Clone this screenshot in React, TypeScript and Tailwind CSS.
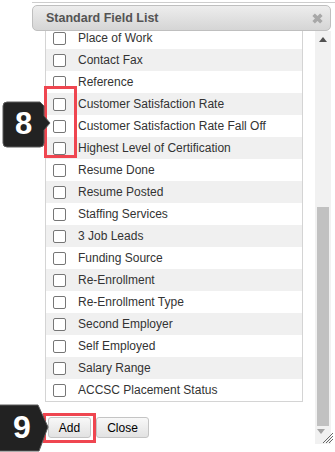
const fields = [
  "Place of Work",
  "Contact Fax",
  "Reference",
  "Customer Satisfaction Rate",
  "Customer Satisfaction Rate Fall Off",
  "Highest Level of Certification",
  "Resume Done",
  "Resume Posted",
  "Staffing Services",
  "3 Job Leads",
  "Funding Source",
  "Re-Enrollment",
  "Re-Enrollment Type",
  "Second Employer",
  "Self Employed",
  "Salary Range",
  "ACCSC Placement Status",
];

function StepBadge8() {
  return (
    <div className="absolute left-[2px] top-[101px] h-[48px] w-[50px]">
      <svg viewBox="0 0 50 48" className="absolute inset-0 h-full w-full" aria-hidden="true">
        <path
          d="M5,1 H38 L42,5 V15 L48,22 L42,29 V42 Q42,46 38,46 H5 Q1,46 1,42 V5 Q1,1 5,1 Z"
          fill="#222"
          stroke="#5a5a5a"
          strokeWidth="1"
        />
      </svg>
      <span className="absolute left-0 top-[5px] w-[43px] text-center text-[31px] font-bold leading-[36px] text-white">
        8
      </span>
    </div>
  );
}

function StepBadge9() {
  return (
    <div className="absolute left-0 top-[404px] h-[48px] w-[52px]">
      <svg viewBox="0 0 52 48" className="absolute inset-0 h-full w-full" aria-hidden="true">
        <path d="M-2,1 H38 L48,23 L39,47 H-2 Z" fill="#222" stroke="#5a5a5a" strokeWidth="1" />
      </svg>
      <span className="absolute left-0 top-[5px] w-[44px] text-center text-[32px] font-bold leading-[36px] text-white">
        9
      </span>
    </div>
  );
}

export default function App() {
  return (
    <div className="relative h-[452px] w-[335px] overflow-hidden bg-white font-['Liberation_Sans',Arial,sans-serif]">
      <div className="ml-[32px] mt-[2px] border-t border-[#cdcdcd] pr-[4px] pt-[2px]">
        {/* title bar */}
        <div className="flex h-[26px] items-center justify-between rounded-[5px] border border-[#bfbfbf] bg-gradient-to-b from-[#ededed] to-[#d5d5d5] pl-[13px] pr-[7px]">
          <span className="text-[12.5px] font-bold text-[#545454]">Standard Field List</span>
          <svg viewBox="0 0 10 10" className="h-[11px] w-[11px]" aria-hidden="true">
            <path d="M1.5,1.5 L8.5,8.5 M8.5,1.5 L1.5,8.5" stroke="#a8a8a8" strokeWidth="3.2" />
          </svg>
        </div>

        <div className="flex">
          <div className="ml-[13px] w-[258px]">
            <div className="h-[371px] overflow-hidden border-x border-b border-[#d4d4d4]">
              <div className="-mt-[4px]">
                {fields.map((f, i) => (
                  <div
                    key={f}
                    className={`flex h-[22px] items-center pl-[7px] ${i % 2 === 1 ? "bg-[#f0f0f0]" : "bg-white"}`}
                  >
                    <span className="h-[13px] w-[13px] shrink-0 rounded-[2px] border border-[#767676] bg-white" />
                    <span className="ml-[12px] text-[12px] text-[#333]">{f}</span>
                  </div>
                ))}
              </div>
            </div>
            <div className="ml-[3px] mt-[15px] flex gap-[5px]">
              <button className="h-[21px] w-[43px] rounded-[3px] border border-[#c4c4c4] bg-gradient-to-b from-[#f8f8f8] to-[#e2e2e2] text-[12px] text-black">
                Add
              </button>
              <button className="h-[21px] w-[53px] rounded-[3px] border border-[#c4c4c4] bg-gradient-to-b from-[#f8f8f8] to-[#e2e2e2] text-[12px] text-black">
                Close
              </button>
            </div>
          </div>

          {/* scrollbar */}
          <div className="relative ml-[12px] flex h-[413px] w-[16px] flex-col bg-[#f1f1f1]">
            <div className="flex h-[17px] items-center justify-center">
              <svg viewBox="0 0 8 5" className="h-[5px] w-[8px]" aria-hidden="true">
                <path d="M0,5 L4,0 L8,5 Z" fill="#505050" />
              </svg>
            </div>
            <div className="h-[159px]" />
            <div className="mx-[2px] h-[219px] bg-[#c1c1c1]" />
            <div className="flex h-[18px] items-start justify-center pt-[3px]">
              <svg viewBox="0 0 8 5" className="-ml-[4px] h-[5px] w-[8px]" aria-hidden="true">
                <path d="M0,0 L4,5 L8,0 Z" fill="#a3a3a3" />
              </svg>
            </div>
            <svg viewBox="0 0 12 12" className="absolute bottom-[0px] right-[-3px] h-[12px] w-[12px]" aria-hidden="true">
              <path d="M11,1 L1,11 M11,4 L4,11 M11,7 L7,11" stroke="#666" strokeWidth="1" />
            </svg>
          </div>
        </div>
      </div>

      {/* annotations */}
      <div className="absolute left-[44px] top-[86px] h-[72px] w-[33px] border-[3px] border-[#ef4650]" />
      <StepBadge8 />
      <div className="absolute left-[43px] top-[413px] h-[30px] w-[53px] border-[3px] border-[#ef4650]" />
      <StepBadge9 />
    </div>
  );
}
